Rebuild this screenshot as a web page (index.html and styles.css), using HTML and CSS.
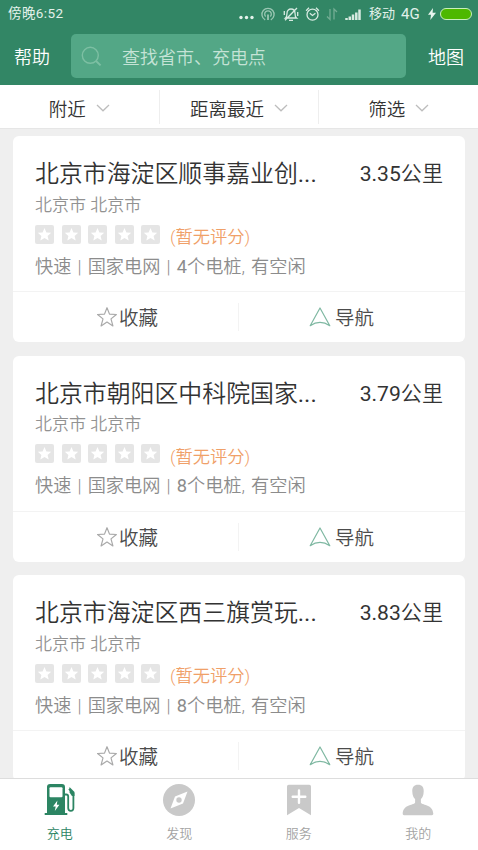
FILE: index.html
```html
<!DOCTYPE html>
<html lang="zh-CN">
<head>
<meta charset="utf-8">
<title>充电</title>
<link rel="stylesheet" href="styles.css">
</head>
<body>
<svg width="0" height="0" class="defs">
  <symbol id="rate" viewBox="0 0 19 19"><rect width="19" height="19" rx="2" fill="#e5e5e5"/><path d="M9.500 3l1.900 4.400 4.800.4-3.600 3.100 1.100 4.700-4.200-2.500-4.200 2.500 1.100-4.700-3.600-3.100 4.800-.4z" fill="#fff"/></symbol>
  <symbol id="star" viewBox="0 0 20 20"><path d="M10 .7l2.500 6.400 6.900.4-5.400 4.400 1.900 7-5.900-3.900-5.900 3.900 1.900-7L.6 7.500l6.900-.4z" fill="none" stroke="#a9a9a9" stroke-width="1.200" stroke-linejoin="round"/></symbol>
  <symbol id="navi" viewBox="0 0 22 20"><path d="M11 1l9.800 17.700Q11 12 1.200 18.700z" fill="none" stroke="#7fb8a2" stroke-width="1.200" stroke-linejoin="round"/></symbol>
  <symbol id="down" viewBox="0 0 14 8"><path d="M1 1l6 5.800L13 1" fill="none" stroke="#bdbdbd" stroke-width="1.300"/></symbol>
</svg>
<div class="app">
  <header class="top">
    <div class="status">
      <span class="clock">傍晚6:52</span>
      <svg class="status-icons" width="130" height="20" viewBox="-6 3 130 20" fill="none" stroke="#d7eae1" stroke-width="1.300">
        <g fill="#e4f2eb" stroke="none"><circle cx="-3" cy="16.500" r="1.700"/><circle cx="2.500" cy="16.500" r="1.700"/><circle cx="8" cy="16.500" r="1.700"/></g>
        <g stroke="#9bc7b3"><path d="M21.200 18.800a6.100 6.100 0 1 1 5.600 0M21.700 15.500a3.300 3.300 0 1 1 4.600 0"/><path d="M24 13.500v5.500" stroke-width="1.800"/></g>
        <path d="M41.500 17c1.300-1 1.500-2.500 1.500-4.800 0-2.600 1.600-4.200 4-4.200s4 1.600 4 4.200c0 2.300.2 3.800 1.500 4.800zM45 19.300h4M53 7L41 19.300M40.300 10v4M53.700 11v4"/>
        <circle cx="68.500" cy="13.700" r="5.500"/><path d="M65.800 12.300l2.700 2.200 2.900-2.200M62.100 9.700l2.900-2.900M74.900 9.700l-2.900-2.900"/>
        <path d="M86 8v10.500l-3-3M90 18.500V8l3 3" stroke="#73ad94"/>
        <path d="M102.500 17v2M105.800 15.500V19M109 13.500V19M112.300 11.500V19M115.500 8.500V19" stroke-width="2.500"/>
      </svg>
      <span class="carrier">移动</span><span class="net">4G</span>
      <svg class="bolt" width="8" height="12" viewBox="0 0 8 12"><path d="M5 0L0 6.800h3L2.300 12 8 4.800H4.600z" fill="#e8f5ee"/></svg>
      <span class="battery"></span>
    </div>
    <div class="search-row">
      <span class="link">帮助</span>
      <div class="search">
        <svg width="21" height="21" viewBox="0 0 21 21" fill="none" stroke="#7dbfa3" stroke-width="1.400"><circle cx="9.300" cy="9.300" r="8"/><path d="M15 15l4.600 4.400" stroke-width="2"/></svg>
        <span>查找省市、充电点</span>
      </div>
      <span class="link">地图</span>
    </div>
  </header>
  <div class="filters">
    <div class="filter"><span>附近</span><svg width="14" height="8"><use href="#down"/></svg></div>
    <div class="filter"><span>距离最近</span><svg width="14" height="8"><use href="#down"/></svg></div>
    <div class="filter"><span>筛选</span><svg width="14" height="8"><use href="#down"/></svg></div>
  </div>
  <main class="list">
    <article class="card">
      <div class="info">
        <div class="head"><h2>北京市海淀区顺事嘉业创<i>...</i></h2><span class="dist"><i>3.35</i>公里</span></div>
        <div class="area">北京市 北京市</div>
        <div class="rating"><svg><use href="#rate"/></svg><svg><use href="#rate"/></svg><svg><use href="#rate"/></svg><svg><use href="#rate"/></svg><svg><use href="#rate"/></svg><span>(暂无评分)</span></div>
        <div class="meta">快速 | 国家电网 | <i>4</i>个电桩, 有空闲</div>
      </div>
      <div class="actions"><div class="action fav"><svg width="20" height="20"><use href="#star"/></svg><span>收藏</span></div><div class="action go"><svg width="22" height="20"><use href="#navi"/></svg><span>导航</span></div></div>
    </article>
    <article class="card">
      <div class="info">
        <div class="head"><h2>北京市朝阳区中科院国家<i>...</i></h2><span class="dist"><i>3.79</i>公里</span></div>
        <div class="area">北京市 北京市</div>
        <div class="rating"><svg><use href="#rate"/></svg><svg><use href="#rate"/></svg><svg><use href="#rate"/></svg><svg><use href="#rate"/></svg><svg><use href="#rate"/></svg><span>(暂无评分)</span></div>
        <div class="meta">快速 | 国家电网 | <i>8</i>个电桩, 有空闲</div>
      </div>
      <div class="actions"><div class="action fav"><svg width="20" height="20"><use href="#star"/></svg><span>收藏</span></div><div class="action go"><svg width="22" height="20"><use href="#navi"/></svg><span>导航</span></div></div>
    </article>
    <article class="card">
      <div class="info">
        <div class="head"><h2>北京市海淀区西三旗赏玩<i>...</i></h2><span class="dist"><i>3.83</i>公里</span></div>
        <div class="area">北京市 北京市</div>
        <div class="rating"><svg><use href="#rate"/></svg><svg><use href="#rate"/></svg><svg><use href="#rate"/></svg><svg><use href="#rate"/></svg><svg><use href="#rate"/></svg><span>(暂无评分)</span></div>
        <div class="meta">快速 | 国家电网 | <i>8</i>个电桩, 有空闲</div>
      </div>
      <div class="actions"><div class="action fav"><svg width="20" height="20"><use href="#star"/></svg><span>收藏</span></div><div class="action go"><svg width="22" height="20"><use href="#navi"/></svg><span>导航</span></div></div>
    </article>
  </main>
  <nav class="tabs">
    <div class="tab active">
      <svg width="32" height="34" viewBox="0 0 32 34"><path d="M3 30V4q0-3 3-3h12q3 0 3 3v26h2.300v2H.7v-2z" fill="#2c8563"/><rect x="5.500" y="4.200" width="13" height="10" rx="1" fill="#fff"/><path d="M13.400 17.500L9 23.600h2.700L10.800 28l4.600-6.200h-2.600z" fill="#fff"/><path d="M21 11.500h1.200q2 0 2 2V25q0 2.800 2.600 2.800T29.400 25V10.500L25 5.800" fill="none" stroke="#2c8563" stroke-width="1.800"/><path d="M25.500 4l5 5v4h-2.600l-2.300-3.400z" fill="#2c8563"/></svg>
      <span>充电</span>
    </div>
    <div class="tab">
      <svg width="32" height="34" viewBox="0 0 32 34"><circle cx="16" cy="17" r="16" fill="#c9c9c9"/><path d="M24.500 8.500L20 20.500 7.500 25.500 12 13.500z" fill="#fff"/><circle cx="16" cy="17" r="2.700" fill="#c9c9c9"/></svg>
      <span>发现</span>
    </div>
    <div class="tab">
      <svg width="32" height="34" viewBox="0 0 32 34"><path d="M4 3.500Q4 1.800 5.700 1.800h20.600Q28 1.800 28 3.500v28.800L16 25 4 32.300z" fill="#c9c9c9"/><path d="M16 7.500v12.300M9.700 13.700h12.600" stroke="#fff" stroke-width="2.400" stroke-linecap="round"/></svg>
      <span>服务</span>
    </div>
    <div class="tab">
      <svg width="32" height="34" viewBox="0 0 32 34"><path d="M16 1.800c4 0 6 2.700 5.700 6.600-.1 4-1.300 6.100-2.800 7.700v3.400c0 2.500 12.100 1.700 12.400 11.100 0 1.200-.5 1.700-1.400 1.700H2.100c-.9 0-1.400-.5-1.400-1.700C1 21.200 13.100 22 13.100 19.500v-3.400c-1.500-1.600-2.700-3.700-2.800-7.700C10 4.500 12 1.800 16 1.800z" fill="#c9c9c9"/></svg>
      <span>我的</span>
    </div>
  </nav>
</div>
</body>
</html>
```
FILE: styles.css
```css
* { box-sizing: border-box; }
body {
  margin: 0;
  font-family: Roboto, "Noto Sans CJK SC", sans-serif;
  font-weight: 350;
  color: #333;
}
svg { display: block; flex: none; }
i { font-style: normal; font-weight: 400; }
.defs { position: absolute; }
.app {
  width: 478px;
  height: 850px;
  display: flex;
  flex-direction: column;
  background: #efefef;
  overflow: hidden;
  white-space: nowrap;
}
.top { flex: none; height: 85px; background: #328665; color: #fff; }
.status {
  height: 27px;
  display: flex;
  align-items: center;
  padding: 0 6px 0 8px;
  font-size: 13px;
  font-weight: 400;
  color: #e2f1ea;
}
.clock { flex: 1; padding-bottom: 3px; font-size: 13.5px; letter-spacing: .4px; }
.status-icons { margin-right: 1px; }
.carrier { width: 32px; padding-bottom: 2px; }
.net { width: 27px; font-size: 15px; }
.bolt { margin-right: 4px; }
.battery {
  width: 32px;
  height: 12px;
  border: 1px solid #c8efbb;
  border-radius: 6px;
  background: #4db800;
}
.search-row {
  display: flex;
  align-items: center;
  padding: 7px 14px 0;
  font-size: 18px;
}
.search-row span { padding-bottom: 1px; }
.link { width: 36px; }
.search {
  width: 335px;
  height: 44px;
  margin: 0 22px 0 21px;
  padding-left: 10px;
  display: flex;
  align-items: center;
  gap: 20px;
  background: #53a786;
  border-radius: 5px;
  color: #c5e3d6;
}
.filters {
  flex: none;
  height: 44px;
  display: flex;
  align-items: center;
  background: #fff;
  font-size: 18.5px;
  border-bottom: 1px solid #e6e6e6;
}
.filter {
  flex: 1;
  height: 34px;
  display: flex;
  align-items: center;
  justify-content: center;
  gap: 10px;
}
.filter span { padding-top: 2px; }
.filter svg { margin-top: 2px; }
.filter + .filter { border-left: 1px solid #eee; }
.list {
  flex: 1;
  min-height: 0;
  overflow: hidden;
  padding: 7px 13px 0;
}
.card {
  height: 206px;
  margin-bottom: 13.6px;
  background: #fff;
  border-radius: 6px;
}
.info { height: 156px; padding: 17.5px 22px 0; border-bottom: 1px solid #f3f3f3; }
.head {
  height: 36px;
  display: flex;
  align-items: center;
  justify-content: space-between;
}
h2 { margin: 0; font-size: 23.9px; font-weight: 350; }
.dist { padding-top: 1px; font-size: 21.1px; }
.area { height: 29px; line-height: 31px; font-size: 17px; color: #929292; }
.rating { height: 31px; display: flex; align-items: center; gap: 7.6px; }
.rating svg { width: 19px; height: 19px; }
.rating span { margin-left: 2px; padding-top: 3px; font-size: 17.3px; color: #f0a068; }
.meta { height: 32px; line-height: 33px; font-size: 18.2px; word-spacing: 1.7px; color: #8c8c8c; }
.actions { height: 50px; display: flex; align-items: center; color: #4c4c4c; font-size: 19.5px; }
.action { flex: 0 0 226px; height: 28px; display: flex; align-items: center; }
.action span { padding-bottom: 1px; }
.fav { padding-left: 84px; gap: 2px; border-right: 1px solid #f3f3f3; }
.go { padding-left: 70px; gap: 4px; }
.tabs {
  flex: none;
  height: 72px;
  display: flex;
  background: #fff;
  border-top: 1px solid #ddd;
  color: #a3a3a3;
  font-size: 13px;
}
.tab {
  flex: 1;
  display: flex;
  flex-direction: column;
  align-items: center;
  padding-top: 4px;
}
.tab span { margin-top: 7px; line-height: 20px; }
.active { color: #2c8563; }
```
